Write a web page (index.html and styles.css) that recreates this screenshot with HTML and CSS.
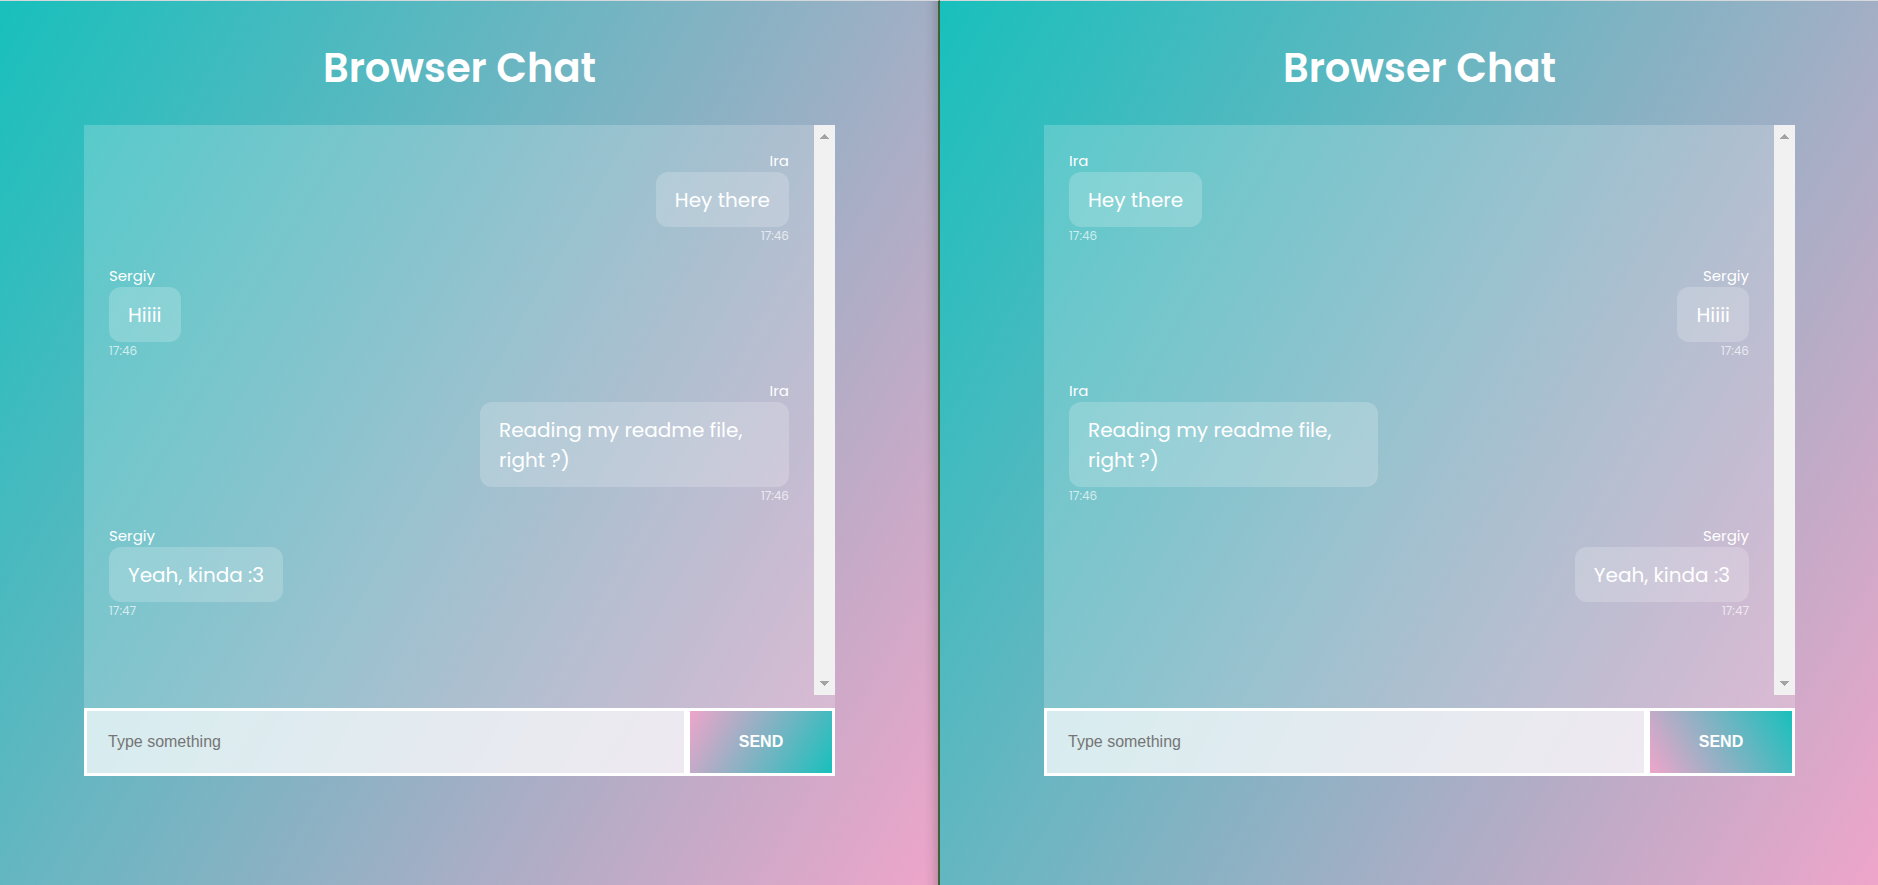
FILE: index.html
```html
<!DOCTYPE html>
<html lang="en">
<head>
<meta charset="utf-8">
<title>Browser Chat</title>
<link rel="stylesheet" href="styles.css">
</head>
<body>
<div class="screens">
  <main class="pane pane-left">
    <h1 class="title">Browser Chat</h1>
    <section class="chat">
      <div class="viewport">
        <ul class="messages">
          <li class="message mine"><span class="author">Ira</span><p class="bubble">Hey there</p><time class="time">17:46</time></li>
          <li class="message"><span class="author">Sergiy</span><p class="bubble">Hiiii</p><time class="time">17:46</time></li>
          <li class="message mine"><span class="author">Ira</span><p class="bubble">Reading my readme file, right ?)</p><time class="time">17:46</time></li>
          <li class="message"><span class="author">Sergiy</span><p class="bubble">Yeah, kinda :3</p><time class="time">17:47</time></li>
        </ul>
        <div class="scrollbar" aria-hidden="true">
          <svg class="arrow" viewBox="0 0 9 5"><path d="M4 0h1v1h1v1h1v1h1v1h1v1H0V4h1V3h1V2h1V1h1z"/></svg>
          <svg class="arrow" viewBox="0 0 9 5"><path d="M4 5h1V4h1V3h1V2h1V1h1V0H0v1h1v1h1v1h1v1h1z"/></svg>
        </div>
      </div>
      <form class="composer">
        <input class="field" type="text" placeholder="Type something" aria-label="Message">
        <button class="send" type="button">SEND</button>
      </form>
    </section>
  </main>
  <main class="pane pane-right">
    <h1 class="title">Browser Chat</h1>
    <section class="chat">
      <div class="viewport">
        <ul class="messages">
          <li class="message"><span class="author">Ira</span><p class="bubble">Hey there</p><time class="time">17:46</time></li>
          <li class="message mine"><span class="author">Sergiy</span><p class="bubble">Hiiii</p><time class="time">17:46</time></li>
          <li class="message"><span class="author">Ira</span><p class="bubble">Reading my readme file, right ?)</p><time class="time">17:46</time></li>
          <li class="message mine"><span class="author">Sergiy</span><p class="bubble">Yeah, kinda :3</p><time class="time">17:47</time></li>
        </ul>
        <div class="scrollbar" aria-hidden="true">
          <svg class="arrow" viewBox="0 0 9 5"><path d="M4 0h1v1h1v1h1v1h1v1h1v1H0V4h1V3h1V2h1V1h1z"/></svg>
          <svg class="arrow" viewBox="0 0 9 5"><path d="M4 5h1V4h1V3h1V2h1V1h1V0H0v1h1v1h1v1h1v1h1z"/></svg>
        </div>
      </div>
      <form class="composer">
        <input class="field" type="text" placeholder="Type something" aria-label="Message">
        <button class="send send-alt" type="button">SEND</button>
      </form>
    </section>
  </main>
</div>
</body>
</html>
```

FILE: styles.css
```css
* {
  box-sizing: border-box;
}

body {
  margin: 0;
  color: #fff;
  font-family: Poppins, Inter, sans-serif;
}

.screens {
  display: flex;
  min-height: 100vh;
}

.pane {
  flex: 1;
  border-top: 1px solid #d5d9dc;
  background: linear-gradient(120deg, #18c0bc, #eea5ca) border-box;
}

.pane-left {
  padding: 0 103px 0 84px;
  border-right: 2px solid #3f5f35;
  background:
    linear-gradient(to left, rgba(60, 60, 60, 0.22), rgba(60, 60, 60, 0.06) 50%, rgba(60, 60, 60, 0)) right / 14px 100% no-repeat padding-box,
    linear-gradient(120deg, #18c0bc, #eea5ca) padding-box;
}

.pane-right {
  padding: 0 83px 0 104px;
}

.title {
  margin: 0;
  padding: 37px 0 27px;
  font-size: 40px;
  line-height: 60px;
  font-weight: 600;
  text-align: center;
}

.chat {
  display: flex;
  flex-direction: column;
}

.viewport {
  display: flex;
  align-items: flex-start;
  background: rgba(255, 255, 255, 0.2);
  padding-bottom: 13px;
}

.messages {
  flex: 1;
  display: flex;
  flex-direction: column;
  gap: 25px;
  margin: 0;
  padding: 24px 25px;
  list-style: none;
}

.message {
  display: flex;
  flex-direction: column;
  align-items: flex-start;
}

.mine {
  align-items: flex-end;
}

.author {
  font-size: 15px;
  line-height: 23px;
  font-weight: 400;
}

.bubble {
  max-width: 309px;
  margin: 0;
  padding: 13px 19px 12px;
  border-radius: 12px;
  background: rgba(255, 255, 255, 0.2);
  font-size: 20px;
  line-height: 30px;
}

.time {
  font-size: 12px;
  line-height: 12px;
  padding-top: 3px;
  margin-bottom: -3px;
  font-weight: 400;
  color: rgba(255, 255, 255, 0.7);
}

.scrollbar {
  display: flex;
  flex-direction: column;
  align-items: center;
  justify-content: space-between;
  width: 21px;
  height: 570px;
  padding: 9px 0;
  background: #f1f1f1;
}

.arrow {
  width: 9px;
  height: 5px;
  fill: #a3a3a3;
}

.composer {
  display: flex;
  background: rgba(255, 255, 255, 0.2);
}

.field,
.send {
  height: 68px;
  border: 3px solid #fff;
  border-radius: 0;
  font: 16px "Liberation Sans", Arial, sans-serif;
}

.field {
  flex: 1;
  min-width: 0;
  padding: 0 21px;
  background: rgba(255, 255, 255, 0.68) padding-box;
}

.field::placeholder {
  color: #757575;
}

.send {
  width: 148px;
  color: #fff;
  font-weight: 700;
  background: linear-gradient(120deg, #eea5ca, #18c0bc) padding-box;
}

.send-alt {
  background: linear-gradient(60deg, #eea5ca, #18c0bc) padding-box;
}
```
